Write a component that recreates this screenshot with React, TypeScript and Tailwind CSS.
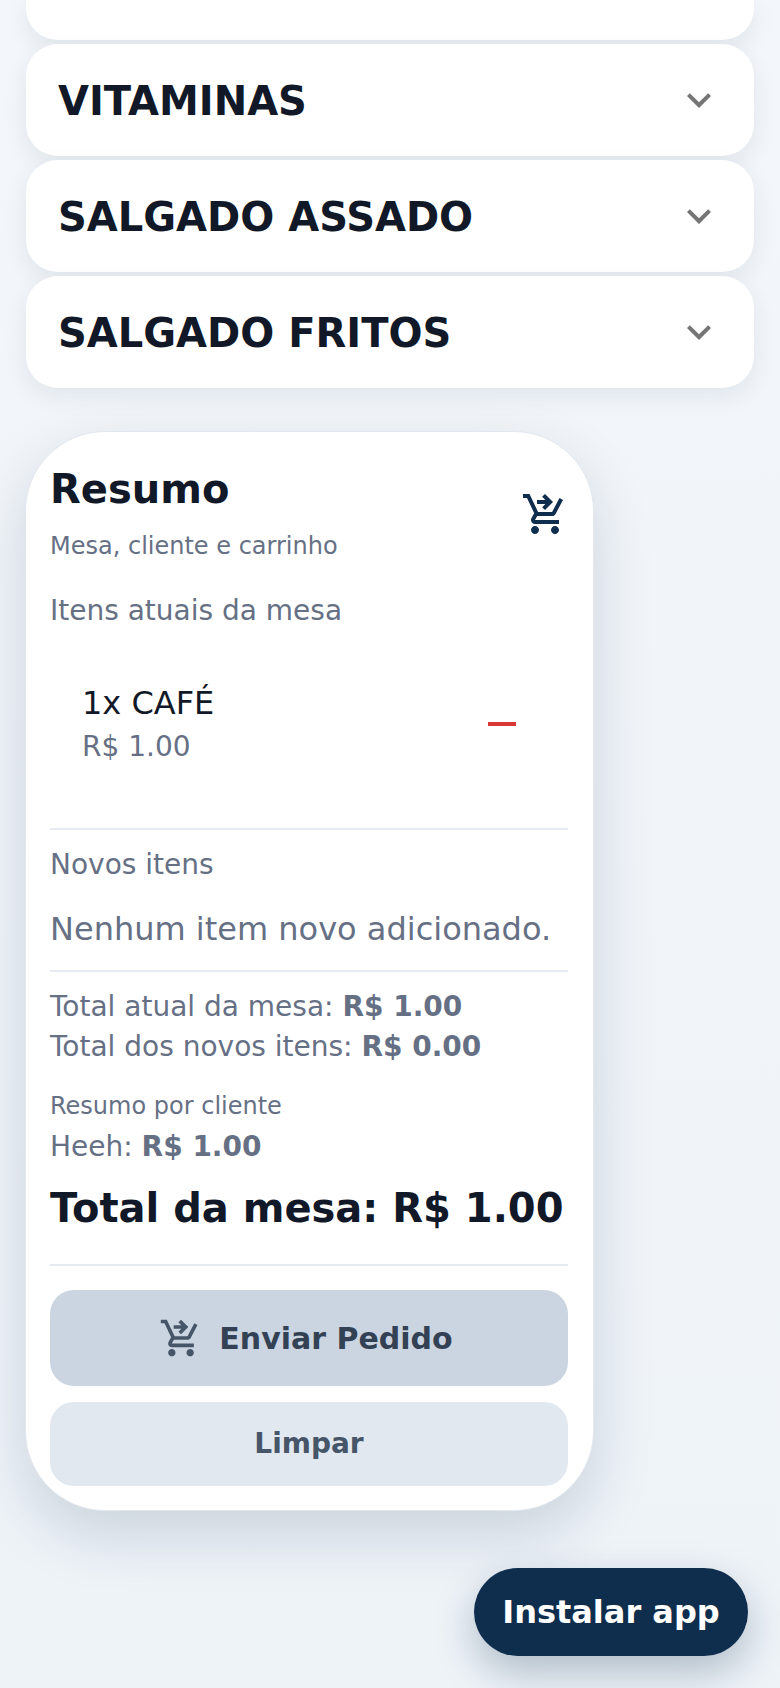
import { MdExpandMore, MdRemove, MdShoppingCartCheckout } from "react-icons/md";

const categories = ["VITAMINAS", "SALGADO ASSADO", "SALGADO FRITOS"];

function CategoryCard({ name }: { name: string }) {
  return (
    <div className="flex h-[112px] items-center justify-between rounded-[32px] bg-white pl-[32px] pr-[31px] shadow-[0_8px_24px_rgba(15,45,77,0.08)]">
      <span className="mt-[2px] text-[40px] font-bold leading-[48px] text-[#111827]">{name}</span>
      <MdExpandMore className="h-[48px] w-[48px] text-[#757575]" />
    </div>
  );
}

export default function App() {
  return (
    <div
      className="relative h-[1688px] w-[780px] overflow-hidden bg-gradient-to-b from-[#f3f6fa] to-[#eef3f8] text-[#667085]"
      style={{ fontFamily: '"DejaVu Sans", sans-serif' }}
    >
      <div className="flex flex-col gap-[4px] px-[26px]">
        <div className="h-[40px] rounded-b-[32px] bg-white shadow-[0_8px_24px_rgba(15,45,77,0.08)]" />
        {categories.map((c) => (
          <CategoryCard key={c} name={c} />
        ))}
      </div>

      <div className="ml-[25px] mt-[43px] w-[569px] rounded-[80px] border border-[#e2e8f0] bg-white pb-[24px] pl-[24px] pr-[25px] pt-[33px] shadow-[0_24px_60px_rgba(15,45,77,0.16)]">
        <div className="flex items-center justify-between">
          <div>
            <h2 className="text-[40px] font-bold leading-[48px] text-[#111827]">Resumo</h2>
            <p className="mt-[17px] text-[24px] leading-[32px]">Mesa, cliente e carrinho</p>
          </div>
          <MdShoppingCartCheckout className="mr-[-1px] h-[48px] w-[48px] text-[#0f2d4d]" />
        </div>

        <p className="mt-[31px] text-[28px] leading-[36px]">Itens atuais da mesa</p>

        <div className="mt-[54px] flex items-center justify-between pl-[32px] pr-[42px]">
          <div>
            <p className="text-[32px] leading-[40px] text-[#111827]">1x CAFÉ</p>
            <p className="mt-[6px] text-[28px] leading-[36px]">R$ 1.00</p>
          </div>
          <MdRemove className="h-[48px] w-[48px] text-[#d93636]" />
        </div>

        <div className="mt-[63px] h-[2px] bg-[#e6ebf2]" />
        <p className="mt-[17px] text-[28px] leading-[36px]">Novos itens</p>
        <p className="mt-[26px] text-[32px] leading-[40px]">Nenhum item novo adicionado.</p>
        <div className="mt-[21px] h-[2px] bg-[#e6ebf2]" />

        <p className="mt-[15px] text-[28px] leading-[40px]">
          Total atual da mesa: <strong>R$ 1.00</strong>
        </p>
        <p className="text-[28px] leading-[40px]">
          Total dos novos itens: <strong>R$ 0.00</strong>
        </p>
        <p className="mt-[23px] text-[24px] leading-[32px]">Resumo por cliente</p>
        <p className="mt-[5px] text-[28px] leading-[40px]">
          Heeh: <strong>R$ 1.00</strong>
        </p>
        <p className="mt-[17px] text-[40px] font-bold leading-[48px] text-[#111827]">Total da mesa: R$ 1.00</p>
        <div className="mt-[32px] h-[2px] bg-[#e6ebf2]" />

        <button className="mt-[24px] flex h-[96px] w-full items-center justify-center gap-[16px] rounded-[24px] bg-[#cbd5e1] pr-[6px] text-[30px] font-bold text-[#334155]">
          <MdShoppingCartCheckout className="h-[44px] w-[44px] text-[#475569]" />
          Enviar Pedido
        </button>
        <button className="mt-[16px] flex h-[84px] w-full items-center justify-center rounded-[24px] bg-[#e2e8f0] text-[28px] font-bold text-[#475569]">
          Limpar
        </button>
      </div>

      <button className="absolute bottom-[32px] right-[32px] flex h-[88px] w-[274px] items-center justify-center rounded-full bg-[#0f2d4d] text-[32px] font-bold text-white shadow-[0_16px_40px_rgba(15,45,77,0.28)]">
        Instalar app
      </button>
    </div>
  );
}
